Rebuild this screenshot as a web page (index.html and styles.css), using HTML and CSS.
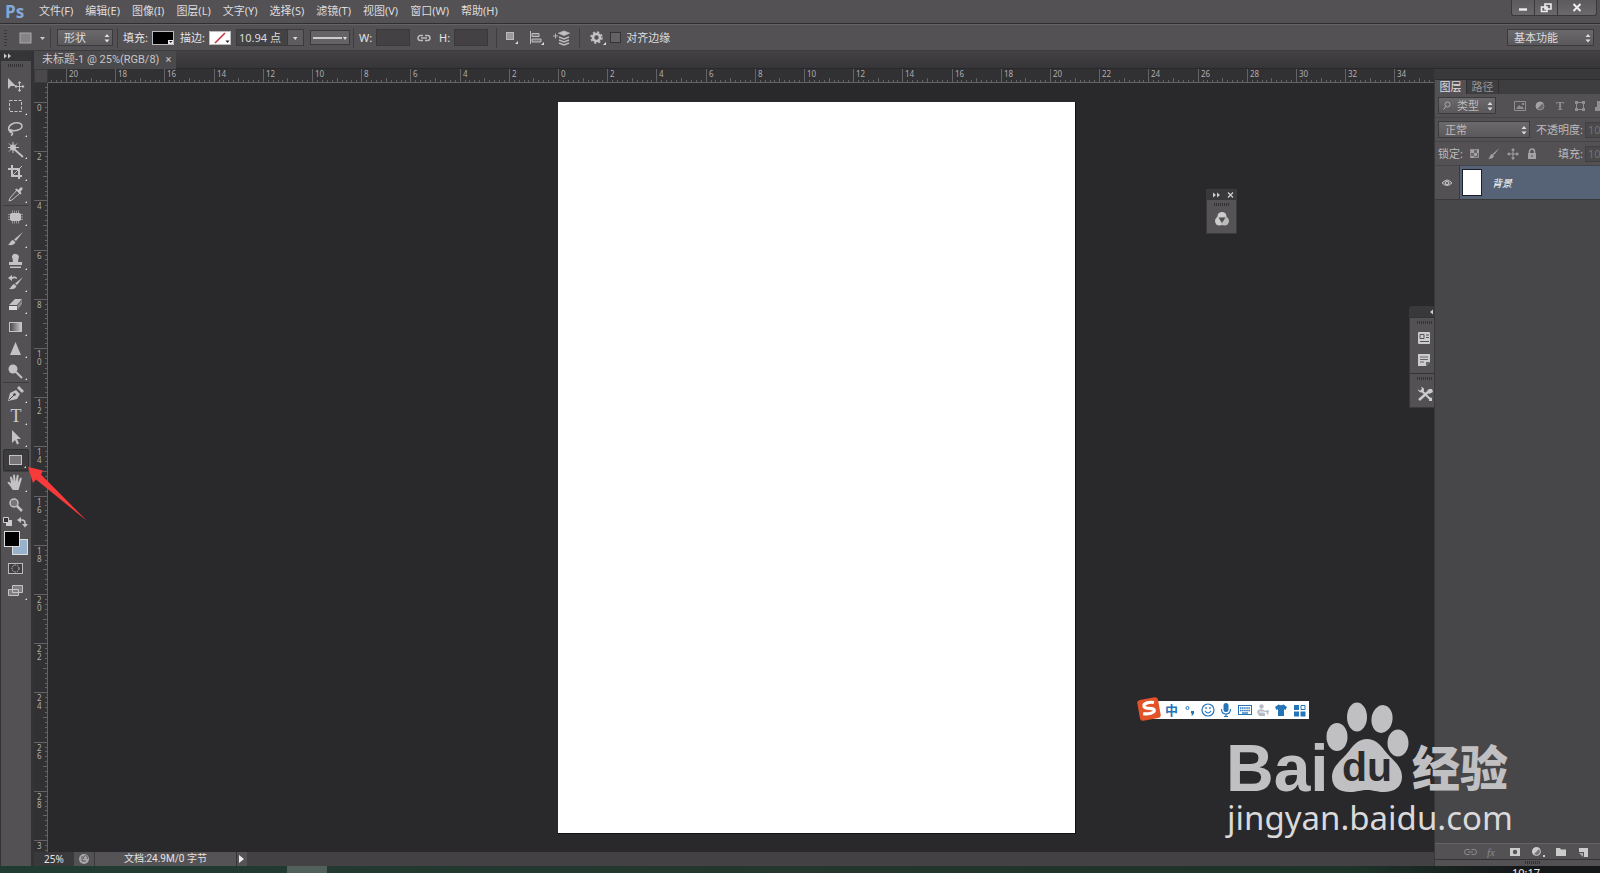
FILE: index.html
```html
<!DOCTYPE html>
<html lang="zh-CN">
<head>
<meta charset="utf-8">
<title>未标题-1 @ 25%(RGB/8)</title>
<link rel="stylesheet" href="styles.css">
</head>
<body>
<header class="menubar">
  <span class="brand">Ps</span>
  <nav class="menus">
    <button>文件(F)</button><button>编辑(E)</button><button>图像(I)</button><button>图层(L)</button><button>文字(Y)</button><button>选择(S)</button><button>滤镜(T)</button><button>视图(V)</button><button>窗口(W)</button><button>帮助(H)</button>
  </nav>
  <div class="winbtns">
    <button aria-label="最小化"><svg width="22" height="15"><path d="M7 9.500h8" stroke="#eee" stroke-width="2.400"/></svg></button>
    <button aria-label="还原"><svg width="22" height="15"><path d="M10 4h6v5h-6zM6.500 7h5.500v4.500h-5.500z" fill="#666466" stroke="#eee" stroke-width="1.600"/></svg></button>
    <button aria-label="关闭" class="wide"><svg width="22" height="15"><path d="M7.500 4l7 7M14.500 4l-7 7" stroke="#eee" stroke-width="2"/></svg></button>
  </div>
</header>

<section class="options">
  <span class="vgrip"></span>
  <button class="preset" aria-label="矩形工具预设"><svg width="28" height="16"><rect x="1" y="3" width="11" height="10" fill="#858385" stroke="#aaa"/><path d="M21 7h5l-2.500 3z" fill="#ccc"/></svg></button>
  <span class="vsep"></span>
  <span class="sel mode"><select aria-label="工具模式"><option>形状</option></select><svg class="ud" width="6" height="10"><path d="M0.500 4L3 1l2.500 3zM0.500 6.500L3 9.500l2.500-3z"/></svg></span>
  <span class="vsep after-mode"></span>
  <span class="lbl">填充:</span>
  <button class="swatch black" aria-label="填充颜色"><svg width="20" height="12"><path d="M15 8h5v4h-5z" fill="#eee"/><path d="M16 9h3.500l-1.700 2z" fill="#222"/></svg></button>
  <span class="lbl stroke">描边:</span>
  <button class="swatch" aria-label="描边颜色"><svg width="20" height="12"><path d="M5 11L15 1" stroke="#cc3340" stroke-width="1.600"/><path d="M15.500 8.500h4l-2 2.500z" fill="#222"/></svg></button>
  <span class="combo"><input aria-label="描边宽度" value="10.94 点"><button aria-label="宽度选项"><svg width="14" height="14"><path d="M5 6h4.500l-2.200 3z" fill="#ddd"/></svg></button></span>
  <button class="line" aria-label="描边类型"><svg width="37" height="14"><path d="M2 7h29" stroke="#eee" stroke-width="1.500"/><path d="M32 6h4l-2 3z" fill="#ddd"/></svg></button>
  <span class="vsep"></span>
  <label class="lbl" for="w">W:</label><input class="num" id="w">
  <svg class="chain" width="14" height="10"><path d="M6 2.500H3.500a2.500 2.500 0 000 5H6M8 2.500h2.500a2.500 2.500 0 010 5H8M4 5h6" fill="none" stroke="#bbb" stroke-width="1.500"/></svg>
  <label class="lbl" for="h">H:</label><input class="num" id="h">
  <span class="vsep ops"></span>
  <button class="op" aria-label="路径操作"><svg width="16" height="18"><rect x="1.500" y="3.500" width="7" height="7" fill="#999" stroke="#bbb"/><path d="M10 15h3v-3z" fill="#ddd"/></svg></button>
  <button class="op" aria-label="路径对齐"><svg width="16" height="18"><path d="M1.500 2v13M3 4.500h7v3H3zM3 10h9v3H3z" fill="#777" stroke="#c0bec0"/><path d="M12 16h3v-3z" fill="#ddd"/></svg></button>
  <button class="op" aria-label="路径排列"><svg width="18" height="18"><path d="M0 7h5M2.500 4.500v5M11 2l5.500 2.200L11 6.500 5.500 4.200z" fill="#c4c2c4" stroke="#b4b2b4"/><path d="M6 8l5 2 5-2M6 11l5 2 5-2M6 14l5 2 5-2" fill="none" stroke="#bbb" stroke-width="1.500"/></svg></button>
  <span class="vsep"></span>
  <button class="gear" aria-label="选项"><svg width="18" height="18"><circle cx="7.500" cy="8.500" r="5.300" fill="none" stroke="#bbb" stroke-width="2" stroke-dasharray="2.200 1.950"/><circle cx="7.500" cy="8.500" r="3.500" fill="none" stroke="#c4c2c4" stroke-width="2.600"/><path d="M14 16h3v-3z" fill="#ddd"/></svg></button>
  <label class="check"><input type="checkbox">对齐边缘</label>
  <span class="sel workspace"><select aria-label="工作区"><option>基本功能</option></select><svg class="ud" width="6" height="10"><path d="M0.500 4L3 1l2.500 3zM0.500 6.500L3 9.500l2.500-3z"/></svg></span>
</section>

<main class="main">
  <aside class="tools">
    <div class="tools-head"><svg width="8" height="6"><path d="M0 .5l3 2.500-3 2.500zM4 .5l3 2.500-3 2.500z" fill="#ccc"/></svg></div>
    <span class="hgrip"></span>
    <div class="group">
      <button aria-label="移动"><svg viewBox="0 0 24 22"><path class="f" d="M4 5v11l3-3h5z"/><path class="s" d="M15.500 9.500v8M11.500 13.500h8"/><path class="f" d="M15.500 8l2 2.300h-4zM15.500 19l2-2.300h-4zM10.500 13.500l2-2v4zM20.500 13.500l-2-2v4z"/></svg></button>
      <button aria-label="选框" class="more"><svg viewBox="0 0 24 22"><rect class="s" x="5.500" y="5.500" width="12" height="11" stroke-dasharray="3 1.500"/></svg></button>
      <button aria-label="套索" class="more"><svg viewBox="0 0 24 22"><path class="s" stroke-width="1.500" d="M8 15c-5-1-4-6 0-8s10-1.500 10 2-7 6-11 4c-3-1-1 3 1 2.500 1.500 1 0 2.500-1 3"/></svg></button>
      <button aria-label="魔棒" class="more"><svg viewBox="0 0 24 22"><path class="s" stroke-width="1.800" d="M10 10l9 8"/><path class="s" d="M9 3v11M4 8.500h11M5 4.500l8 8M13 4.500l-8 8"/><circle class="f" cx="9" cy="8.500" r="3"/></svg></button>
      <button aria-label="裁剪" class="more"><svg viewBox="0 0 24 22"><path class="s" stroke-width="2" d="M8 4v11h10M4 8h11v10"/><path class="s" d="M7 16L18 5"/></svg></button>
      <button aria-label="吸管" class="more"><svg viewBox="0 0 24 22"><path class="s" d="M13 7l3 3-8 7-3 1 1-3z"/><path class="f" d="M11 6.500l1.500-1 2 1.500c1-2 2.500-3 3.500-2.500 1.500 1 0 3-1.500 4l1 2-1 1z"/></svg></button>
    </div>
    <div class="group">
      <button aria-label="修补" class="more"><svg viewBox="0 0 24 22"><rect class="f" x="6" y="7" width="11" height="8" rx="2"/><path class="s" d="M8.500 4.500v13M10.500 4.500v13M12.500 4.500v13M14.500 4.500v13M4 8.500h15M4 11h15M4 13.500h15" opacity=".6"/></svg></button>
      <button aria-label="画笔" class="more"><svg viewBox="0 0 24 22"><path class="f" d="M19 4l-7 9-2-1.500zM9 12l2.500 2c-1 3-4 3.500-7.500 3 2-1 2.500-4.500 5-5z"/></svg></button>
      <button aria-label="图章" class="more"><svg viewBox="0 0 24 22"><path class="f" d="M12 4a3 3 0 012.500 4.500L14 12h4v3H5v-3h4l-.5-3.500A3 3 0 0112 4zM6 16.500h11V18H6z"/></svg></button>
      <button aria-label="历史画笔" class="more"><svg viewBox="0 0 24 22"><path class="f" d="M19 5l-6 8-2-1.500zM10 12l2.500 2c-1 3-4 3.500-7.500 3 2-1 2.500-4 5-5zM4 6l4-3v2c4-1 5 0 5 2-2-1-3-1-5 0v2z"/></svg></button>
      <button aria-label="橡皮擦" class="more"><svg viewBox="0 0 24 22"><path class="f" d="M11 5h7l-5 6H5z"/><path d="M5 12h8v4H5z" fill="#dcdadc"/><path d="M13.500 11.500L18 6v4l-4.500 6z" fill="#8c8a8c"/></svg></button>
      <button aria-label="渐变" class="more"><svg viewBox="0 0 24 22"><defs><linearGradient id="g"><stop stop-color="#454345"/><stop offset="1" stop-color="#ccc"/></linearGradient></defs><rect x="5.500" y="6.500" width="12" height="9" fill="url(#g)" stroke="#c4c2c4"/></svg></button>
      <button aria-label="锐化" class="more"><svg viewBox="0 0 24 22"><path class="f" d="M11.500 4L17 17H6z"/></svg></button>
      <button aria-label="减淡" class="more"><svg viewBox="0 0 24 22"><circle class="f" cx="9" cy="9" r="4.500"/><path class="s" stroke-width="2" d="M12 12l6 6"/></svg></button>
    </div>
    <div class="group">
      <button aria-label="钢笔" class="more"><svg viewBox="0 0 24 22"><path class="f" d="M4 18l2-8 6-3 4 4-3 5zM13 5l2-2 5 5-2 2z"/><path d="M5 17l5-5" stroke="#444"/><circle cx="10.500" cy="11.500" r="1.300" fill="#444"/></svg></button>
      <button aria-label="文字" class="more type">T</button>
      <button aria-label="路径选择" class="more"><svg viewBox="0 0 24 22"><path class="f" d="M8 3v13l3-3 2 4.500 2-1-2-4.500h4z"/></svg></button>
      <button aria-label="矩形" class="more active"><svg viewBox="0 0 24 22"><rect x="5.500" y="6.500" width="12" height="9" fill="#777577" stroke="#c4c2c4"/></svg></button>
    </div>
    <div class="group">
      <button aria-label="抓手" class="more"><svg viewBox="0 0 24 22"><path class="f" d="M8 17c-1-3-4-5-4.500-6.500.5-1.500 2-.5 3.500 1L6 5.500c0-1.500 1.500-1.500 2 0l1.500 4-.5-6c.2-1.500 1.800-1.500 2 0l.7 6 1-6c.5-1.300 2-1 1.900.5l-.6 6.500L16 6c.8-1 2-.5 1.700 1L16 13l-1.500 5H9z"/></svg></button>
      <button aria-label="缩放"><svg viewBox="0 0 24 22"><circle cx="10" cy="9" r="4" fill="#777577" stroke="#c4c2c4" stroke-width="1.500"/><path class="s" stroke-width="2.500" d="M13 12l5 5"/></svg></button>
    </div>
    <button class="mini" aria-label="默认与切换颜色"><svg width="28" height="12"><path d="M4 4h6v6H4z" fill="#ccc"/><path d="M1.500 1.500h5v5h-5z" fill="#333" stroke="#ccc"/><path class="s" stroke-width="1.500" d="M18 4h2q3 0 3 3v2"/><path class="f" d="M19 1v6l-4-3zM20 8h6l-3 3.500z"/></svg></button>
    <div class="colors"><button class="bg" aria-label="背景色"></button><button class="fg" aria-label="前景色"></button></div>
    <div class="last">
      <button aria-label="快速蒙版"><svg viewBox="0 0 24 22"><rect x="4.500" y="5.500" width="14" height="10" fill="#403e40" stroke="#bbb"/><circle cx="11.500" cy="10.500" r="3.500" fill="none" stroke="#ccc" stroke-dasharray="1.500 1"/></svg></button>
      <button aria-label="屏幕模式" class="more"><svg viewBox="0 0 24 22"><path d="M8.500 5.500h10v7h-10zM4.500 9.500h10v6h-10z" fill="#807e80" stroke="#c4c2c4"/></svg></button>
    </div>
  </aside>

  <div class="right">
    <div class="tabs"><div class="tab">未标题-1 @ 25%(RGB/8)<button aria-label="关闭文档">×</button></div></div>
    <div class="work">
      <div class="doc">
        <div class="corner"></div>
        <svg class="hruler" id="hruler"></svg>
        <svg class="vruler" id="vruler"></svg>
        <div class="canvas">
          <div class="page"></div>
          <div class="floater">
            <div class="floater-head"><svg width="22" height="8"><path d="M0 1.500l3 2.500-3 2.500zM4 1.500l3 2.500-3 2.500z" fill="#ccc"/><path d="M15 1.500l5 5M20 1.500l-5 5" stroke="#ccc" stroke-width="1.300"/></svg></div>
            <span class="hgrip"></span>
            <button aria-label="颜色"><svg width="16" height="16"><circle cx="8" cy="5.500" r="4.500" fill="#ccc"/><circle cx="5.500" cy="10" r="4.500" fill="#ccc"/><circle cx="10.500" cy="10" r="4.500" fill="#bbb"/><path d="M4.500 6.500h7L8 12z" fill="#514f51"/></svg></button>
          </div>
          <div class="dock">
            <div class="floater-head"><svg width="4" height="6"><path d="M4 .5L1 3l3 2.500z" fill="#ccc"/></svg></div>
            <div class="dock-group"><span class="hgrip"></span>
              <button aria-label="画笔预设"><svg width="14" height="16"><rect x="1" y="2" width="12" height="12" rx="1" fill="#ccc"/><path d="M3 4.500h4v4H3zM9 5h3M9 7.500h3M3 11.500h9" stroke="#555" fill="none"/></svg></button>
              <button aria-label="注释"><svg width="14" height="16"><path d="M1 2h12v8l-4 4H1z" fill="#ccc"/><path d="M3 5h8M3 7.500h8M3 10h4" stroke="#666"/><path d="M13 10H9v4z" fill="#666"/></svg></button>
            </div>
            <div class="dock-group"><span class="hgrip"></span>
              <button aria-label="工具预设"><svg width="16" height="16"><path d="M4 4l9 9" stroke="#ccc" stroke-width="2"/><path d="M2 14l9-8" stroke="#ccc" stroke-width="2.500"/><path d="M1 3l2 2 2-2-1-2c3 0 4 3 2 5-2 1-5 0-5-3zM15 3h-3l-2 2 2 3 4-2zM12 11l3 1v3h-3z" fill="#ccc"/></svg></button>
            </div>
          </div>
        </div>
      </div>

      <aside class="panel">
        <div class="panel-head"></div>
        <div class="panel-tabs"><button class="on">图层</button><button>路径</button></div>
        <div class="prow">
          <span class="sel kind"><svg class="mag" width="8" height="9"><circle cx="4.500" cy="3.500" r="2.500" fill="none" stroke="#aaa"/><path d="M3 5.500L.5 8.500" stroke="#aaa"/></svg><select aria-label="类型"><option>类型</option></select><svg class="ud" width="6" height="10"><path d="M0.500 4L3 1l2.500 3zM0.500 6.500L3 9.500l2.500-3z"/></svg></span>
          <span class="filters">
            <svg width="12" height="12"><path d="M.5 1.500h11v9H.5z" fill="none" stroke="#908e90"/><path d="M2 9l3-4 2 2 1-1 2 3zM8 3h2v2H8z" fill="#908e90"/></svg>
            <svg width="12" height="12"><circle cx="6" cy="6" r="4" fill="#6a686a" stroke="#908e90"/><path d="M3 9A4.200 4.200 0 019 3z" fill="#a4a2a4"/></svg>
            <span class="tt">T</span>
            <svg width="12" height="12"><path d="M2.500 2.500h7v7h-7z" fill="none" stroke="#908e90"/><path d="M1 1h3v3H1zM8 1h3v3H8zM1 8h3v3H1zM8 8h3v3H8z" fill="#908e90"/></svg>
            <svg width="12" height="12"><path d="M3 1h8v6H3zM1 7h10v4H1z" fill="#908e90"/></svg>
          </span>
        </div>
        <div class="prow">
          <span class="sel blend"><select aria-label="混合模式"><option>正常</option></select><svg class="ud" width="6" height="10"><path d="M0.500 4L3 1l2.500 3zM0.500 6.500L3 9.500l2.500-3z"/></svg></span>
          <label class="plabel" for="op">不透明度:</label><input class="pct" id="op" value="100%" disabled>
        </div>
        <div class="prow lock">
          <span class="plabel0">锁定:</span>
          <span class="locks">
            <svg width="12" height="12"><rect x="1.500" y="1.500" width="8" height="8" fill="#6a686a" stroke="#908e90"/><path d="M2 2h3v3H2zM5 5h3v3H5zM8 2h2v3H8zM2 8h3v2H2z" fill="#a4a2a4"/></svg>
            <svg width="12" height="12"><path d="M11.500 0L6 7 4.500 6zM4 6l2 2c-1 3-4 3-6 2.500C2 10 2 6.500 4 6z" fill="#a4a2a4"/></svg>
            <svg width="12" height="12"><path d="M6 1v10M1 6h10" stroke="#a4a2a4"/><path d="M6 0l2 2.500H4zM6 12l2-2.500H4zM0 6l2.500-2v4zM12 6L9.500 4v4z" fill="#a4a2a4"/></svg>
            <svg width="12" height="12"><path d="M2 5h8v6H2z" fill="#a4a2a4"/><path d="M3.500 5V3.500a2.500 2.500 0 015 0V5" fill="none" stroke="#a4a2a4" stroke-width="1.500"/><path d="M6 7v2" stroke="#555"/></svg>
          </span>
          <label class="plabel" for="fill">填充:</label><input class="pct" id="fill" value="100%" disabled>
        </div>
        <div class="layer">
          <button class="eye" aria-label="可见性"><svg width="12" height="10"><path d="M1 5q5-6 10 0-5 5-10 0z" fill="#777577" stroke="#bbb"/><circle cx="6" cy="5" r="2" fill="#ccc"/><circle cx="6" cy="5" r="1" fill="#444"/></svg></button>
          <div class="layer-body"><span class="thumb"></span><span class="lname">背景</span></div>
        </div>
        <div class="empty"></div>
        <div class="panel-foot">
          <svg width="13" height="12"><path d="M5.500 3.500H3a2.500 2.500 0 000 5h2.500M7.500 3.500H10a2.500 2.500 0 010 5H7.500M4 6h5" fill="none" stroke="#8c8a8c"/></svg>
          <span class="fx">fx</span>
          <svg width="12" height="12"><path d="M1 2h10v8H1z" fill="#ccc"/><circle cx="6" cy="6" r="2.200" fill="#555"/></svg>
          <svg width="14" height="12"><circle cx="5.500" cy="5.500" r="4" fill="#777" stroke="#ccc"/><path d="M2.500 8.500a4.200 4.200 0 016-6z" fill="#ccc"/><path d="M12 9h2v2h-2z" fill="#ccc"/></svg>
          <svg width="12" height="12"><path d="M1 2h4l1 1.500h5V10H1z" fill="#ccc"/></svg>
          <svg width="12" height="12"><path d="M2 2h9v9H7V6H2z" fill="#ccc"/><path d="M2 7h4v4z" fill="#aaa"/></svg>
        </div>
        <div class="panel-grip"><span class="hgrip"></span></div>
      </aside>

      <footer class="status">
        <span class="zoom">25%</span>
        <button class="share" aria-label="共享"><svg width="12" height="12"><circle cx="6" cy="6" r="5" fill="#aaa8aa"/><path d="M4 3v5h4M6 6a2 2 0 113 0" stroke="#555" fill="none"/></svg></button>
        <span class="info">文档:24.9M/0 字节</span>
        <button class="play" aria-label="状态选项"><svg width="10" height="12"><path d="M2 2v8l5-4z" fill="#eee"/></svg></button>
      </footer>
    </div>
  </div>
</main>
<div class="taskbar"><span class="task"></span><span class="clock">10:17</span></div>

<svg class="pointer" width="60" height="56" viewBox="0 0 60 56"><path d="M0 0L15 3.500 13 7.500 59 54 8 12.500 5 16z" fill="#f93a3a"/></svg>

<div class="ime">
  <svg class="sogou" width="24" height="24"><g transform="rotate(-10 12 12)"><rect x="1.500" y="1.500" width="21" height="21" rx="3" fill="#e2532a"/><path d="M18 6.500C14 5 7.500 5 7.500 8.500c0 4 9.500 2 9.500 5.500 0 3-7 3-11.500 1.500" fill="none" stroke="#fff" stroke-width="3.200"/></g></svg>
  <span class="zh">中</span>
  <svg width="14" height="14"><circle cx="4.500" cy="5" r="1.500" fill="none" stroke="#2574b8"/><path d="M8 8h3v2.500L9 13l-.5-.5.500-2H8z" fill="#2574b8"/></svg>
  <svg width="14" height="14"><circle cx="7" cy="7" r="6" fill="none" stroke="#2574b8" stroke-width="1.200"/><path d="M5 4v2M9 4v2M4 8q3 4 6 0" fill="none" stroke="#2574b8" stroke-width="1.200"/></svg>
  <svg width="14" height="14"><rect x="4.500" y="0" width="5" height="9" rx="2.500" fill="#2574b8"/><path d="M2.500 6q0 5 4.500 5t4.500-5M7 11v3M5 13.500h4" fill="none" stroke="#2574b8" stroke-width="1.200"/></svg>
  <svg width="14" height="14"><rect x=".5" y="2.500" width="13" height="9" fill="none" stroke="#2574b8"/><path d="M2 5h10M2 7.500h10" stroke="#2574b8" stroke-width="1.500" stroke-dasharray="1.500 .6"/><path d="M4 10h6" stroke="#2574b8" stroke-width="1.300"/></svg>
  <svg width="14" height="14"><circle cx="5.500" cy="3.500" r="2.200" fill="#b5bac6"/><path d="M1 9c1-4 8-3 8 0v4H3zM8 8l5-1-1 5z" fill="#b5bac6"/><path d="M3 9h4l4 1" stroke="#fff" fill="none"/></svg>
  <svg width="14" height="14"><path d="M4.500 1.500q2.500 1.500 5 0L13 4l-1.500 3-1.500-.7V13H4V6.300L2.500 7 1 4z" fill="#2574b8"/></svg>
  <svg width="14" height="14"><path d="M2 2h5v5H2zM2 8.500h5v5H2zM8.500 8.500h5v5h-5z" fill="#2574b8"/><path d="M9 2.500h4v4H9z" fill="none" stroke="#2574b8"/></svg>
</div>

<div class="mark">
  <div class="mark-top">
    <span class="bai">Bai</span>
    <span class="paw"><svg width="84" height="92" viewBox="0 0 84 92"><g fill="#c0bfc1"><ellipse cx="11" cy="35" rx="10.500" ry="14"/><ellipse cx="31" cy="15" rx="10" ry="14.500"/><ellipse cx="56" cy="17" rx="10.500" ry="14" transform="rotate(8 56 17)"/><ellipse cx="72" cy="41" rx="10.500" ry="13.500"/><path d="M41 37c8 0 13 5 18 12 6 8 17 14 17 26 0 10-8 15-18 15-7 0-11-2-17-2s-10 2-17 2C13 90 6 85 6 75c0-11 10-17 17-26 5-7 10-12 18-12z"/></g></svg><span class="du">du</span></span>
    <span class="jy">经验</span>
  </div>
  <div class="url">jingyan.baidu.com</div>
</div>
<script src="rulers.js"></script>
</body>
</html>
```

FILE: styles.css
```css
* { box-sizing: border-box; }
body {
  margin: 0; min-height: 100vh; display: flex; flex-direction: column; position: relative; overflow: hidden;
  background: #29282a; color: #dedcde;
  font: 11px/16px "Noto Sans", "Noto Sans CJK SC", sans-serif;
}
button, input, select { font: inherit; color: inherit; border: 0; padding: 0; margin: 0; background: none; border-radius: 0; }
button { display: flex; align-items: center; justify-content: center; }
select { appearance: none; width: 100%; height: 100%; padding-left: 6px; line-height: 14px; }
svg { display: block; flex: none; }
.f { fill: #c4c2c4; }
.s { fill: none; stroke: #c4c2c4; }

.menubar { display: flex; height: 24px; background: #535153; border-bottom: 1px solid #2f2e30; align-items: center; }
.brand { width: 39px; padding-left: 5px; font: bold 17px/20px "Open Sans", sans-serif; color: #82a9d8; }
.menus { display: flex; gap: 12px; flex: 1; padding-bottom: 1px; }
.winbtns { display: flex; align-self: flex-start; margin-right: 3px; height: 16px; border: 1px solid #39383a; border-top: 0; border-radius: 0 0 3px 3px; background: linear-gradient(#5c5a5c, #6a686a); }
.winbtns button { width: 23px; border-right: 1px solid #39383a; }
.winbtns .wide { width: 38px; border-right: 0; }

.options { display: flex; align-items: center; height: 27px; background: #535153; border-top: 1px solid #656365; border-bottom: 1px solid #3c3b3d; padding-left: 4px; }
.vgrip { width: 3px; height: 16px; background: repeating-linear-gradient(#39383a 0 1px, transparent 1px 3px); }
.vsep { width: 1px; height: 20px; background: #3e3d3f; margin: 0 6px; }
.preset { margin-left: 12px; width: 28px; margin-right: -3px; }
.after-mode { margin: 0 5px 0 4px; }
.sel { position: relative; flex: none; height: 17px; background: linear-gradient(#6b696b, #5a585a); border: 1px solid #3b3a3c; display: block; }
.ud { position: absolute; right: 2px; top: 3px; fill: #ddd; pointer-events: none; }
.mode { width: 56px; }
.lbl { color: #e4e2e4; white-space: nowrap; }
.swatch { width: 22px; height: 14px; border: 1px solid #bbb; background: #fff; margin-left: 4px; }
.swatch.black { background: #000; }
.stroke { margin-left: 6px; }
.combo { display: flex; width: 68px; height: 17px; margin-left: 5px; border: 1px solid #3a393b; background: #434244; }
.combo input { width: 50px; padding-left: 2px; }
.combo button { width: 16px; background: #5e5c5e; border-left: 1px solid #3a393b; }
.line { width: 40px; height: 15px; margin-left: 6px; border: 1px solid #39383a; background: #656365; }
.line + .vsep { margin: 0 5px 0 3px; }
.num { width: 34px; height: 17px; background: #434143; border: 1px solid #39383a; margin-left: 4px; }
.chain { margin: 0 8px 0 7px; }
.ops { margin: 0 8px; }
.op { margin-right: 8px; }
.op + .vsep { margin: 0 8px 0 0; }
.gear { width: 20px; }
.check { display: flex; align-items: center; gap: 5px; margin-left: 2px; }
.check input { appearance: none; width: 11px; height: 11px; border: 1px solid #353436; background: #646264; }
.workspace { width: 87px; margin-left: auto; margin-right: 6px; }

.main { display: flex; flex: 1; min-height: 0; }
.tools { width: 34px; border-left: 1px solid #333; border-right: 3px solid #333234; background: #535153; display: flex; flex-direction: column; align-items: center; }
.tools-head { align-self: stretch; height: 10px; padding: 2px 3px; background: #353436; }
.hgrip { display: block; width: 16px; height: 3px; margin: 4px auto 0; background: repeating-linear-gradient(90deg, #333234 0 1px, transparent 1px 2px); }
.tools > .hgrip { margin: 3px auto 6px; }
.group + .group { border-top: 1px solid #3e3d3f; }
.group button, .last button { width: 26px; height: 22px; position: relative; }
.group svg, .last svg { width: 24px; height: 22px; }
.more::after { content: ""; position: absolute; right: 2px; bottom: 2px; border: 1px solid #ddd; border-top-color: transparent; border-left-color: transparent; }
.type { font: 18px/22px "Liberation Serif", serif; color: #ccc; }
.group .active { background: #3b3a3c; border: 1px solid #2e2d2f; border-radius: 2px; }
.mini { height: 12px; }
.colors { position: relative; width: 28px; height: 30px; }
.colors button { position: absolute; width: 16px; height: 16px; border: 1px solid #ddd; }
.colors .fg { left: 2px; top: 3px; background: #000; }
.colors .bg { right: 2px; bottom: 3px; background: #97b2ca; }

.right { flex: 1; min-width: 0; display: flex; flex-direction: column; }
.tabs { height: 18px; background: linear-gradient(#434144, #363537); border-bottom: 1px solid #29282a; display: flex; }
.tab { display: flex; align-items: center; gap: 6px; padding: 0 5px 0 8px; height: 18px; background: #4a494b; color: #c8c6c8; font-family: Roboto, "Noto Sans CJK SC", sans-serif; }
.work { flex: 1; min-height: 0; display: grid; grid-template-columns: minmax(0, 1fr) 166px; grid-template-rows: minmax(0, 1fr) 14px; }
.doc { display: grid; grid-template-columns: 14px minmax(0, 1fr); grid-template-rows: 14px minmax(0, 1fr); min-height: 0; }
.corner { background: #4a484a; border: 1px solid #3a393b; }
.hruler, .vruler { width: 100%; height: 100%; background: #313032; overflow: hidden; }
.hruler path, .vruler path { stroke: #646264; fill: none; shape-rendering: crispEdges; }
.hruler text, .vruler text { font: 8px "Noto Sans", sans-serif; fill: #b0aeb0; }
.canvas { position: relative; overflow: hidden; background: #29282a; }
.page { position: absolute; left: 510px; top: 19px; width: 518px; height: 732px; background: #fff; border-right: 1px solid #111; border-bottom: 1px solid #111; }
.floater { position: absolute; right: 197px; top: 106px; width: 31px; height: 45px; background: #555355; border: 1px solid #3a393b; }
.floater-head { height: 10px; display: flex; align-items: center; justify-content: flex-end; background: #39383a; padding-right: 1px; }
.floater .hgrip { margin: 3px auto 2px; }
.floater button { width: 100%; height: 22px; }
.dock { position: absolute; right: 0; top: 223px; width: 25px; background: #535153; border: 1px solid #39383a; border-right: 0; border-radius: 4px 0 0 0; overflow: hidden; }
.dock-group { padding-left: 7px; border-top: 1px solid #333; padding-bottom: 2px; }
.dock-group .hgrip { margin: 3px 0; }
.dock-group button { height: 22px; justify-content: flex-start; }

.panel { grid-row: 1 / 3; grid-column: 2; min-width: 0; overflow: hidden; display: flex; flex-direction: column; background: #535153; border-left: 1px solid #39383a; color: #bcbabc; }
.panel-head { height: 11px; background: #39383a; border-bottom: 1px solid #2d2c2e; }
.panel-tabs { display: flex; height: 14px; background: #3e3d3f; }
.panel-tabs button { width: 32px; color: #999799; border-right: 1px solid #2f2e30; line-height: 14px; }
.panel-tabs .on { background: #535153; color: #e0dee0; }
.prow { display: flex; align-items: center; flex: none; height: 24px; border-bottom: 1px solid #454446; padding-left: 3px; white-space: nowrap; }
.kind { width: 58px; display: flex; align-items: center; }
.kind .mag { margin-left: 4px; }
.filters { display: flex; gap: 8px; margin-left: 18px; align-items: center; }
.tt { width: 12px; text-align: center; font: bold 12px/12px "Liberation Serif", serif; color: #908e90; }
.blend { width: 92px; }
.plabel { margin-left: 6px; }
.pct { width: 40px; flex: none; height: 16px; margin-left: 2px; padding-left: 2px; background: #4a494b; border: 1px solid #403f41; color: #747274; }
.locks { display: flex; gap: 7px; margin-left: 6px; }
.lock .plabel { margin-left: 20px; }
.layer { display: flex; flex: none; height: 33px; }
.eye { width: 25px; border-right: 1px solid #3a393b; }
.layer-body { flex: 1; display: flex; align-items: center; background: #566376; padding-left: 2px; }
.thumb { width: 20px; height: 27px; background: #fff; border: 1px solid #1b1e2a; }
.lname { margin-left: 10px; font-style: italic; color: #fff; font-size: 10px; }
.empty { flex: 1; background: #474648; border-top: 1px solid #39383a; }
.panel-foot { display: flex; flex: none; align-items: center; height: 16px; padding-left: 29px; gap: 10px; border-top: 1px solid #656365; }
.fx { font: italic 11px/12px "Liberation Serif", serif; color: #8c8a8c; width: 12px; }
.panel-grip { height: 7px; flex: none; border-top: 1px solid #333; }
.panel-grip .hgrip { margin: 1px 0 0 90px; }

.status { grid-column: 1; display: flex; height: 14px; background: #434143; color: #e4e2e4; line-height: 14px; font-size: 10px; }
.zoom { width: 40px; background: #39383a; padding-left: 10px; }
.share { width: 20px; background: #535153; }
.info { width: 142px; border-left: 1px solid #39383a; background: #555355; text-align: center; font-family: Roboto, "Noto Sans CJK SC", sans-serif; }
.play { width: 11px; background: #555355; border-left: 1px solid #333; }

.taskbar { height: 7px; overflow: hidden; background: linear-gradient(90deg, #203c32, #24362e 50%, #1d3229 85%, #151718 95%); display: flex; }
.task { width: 40px; margin-left: 287px; background: #52605c; }
.clock { margin-left: auto; margin-right: 60px; line-height: 14px; color: #eee; }

.pointer { position: absolute; left: 28px; top: 467px; }
.ime { position: absolute; right: 291px; top: 701px; height: 18px; width: 166px; background: #fff; display: flex; align-items: center; justify-content: space-between; padding: 0 3px 0 22px; color: #2574b8; }
.sogou { position: absolute; left: -6px; top: -4px; }
.zh { width: 14px; font: bold 13px/16px "Noto Sans CJK SC", sans-serif; }
.mark { position: absolute; right: 84px; top: 702px; width: 290px; }
.mark-top { display: flex; height: 92px; color: #c0bfc1; }
.bai { width: 98px; margin-top: 38px; font: bold 66px/56px "Liberation Sans", sans-serif; }
.paw { position: relative; width: 84px; margin-left: 2px; }
.du { position: absolute; left: 16px; top: 44px; font: bold 41px/42px "Liberation Sans", sans-serif; color: #2b2a2c; }
.jy { margin: 39px 0 0 2px; font: 900 48px/48px "Noto Sans CJK SC", sans-serif; white-space: nowrap; }
.url { font: 33px/44px "Noto Sans", sans-serif; color: #dad9db; margin-top: 2px; padding-left: 1px; }
```

FILE: rulers.js
```js
(function () {
  var NS = 'http://www.w3.org/2000/svg';
  var STEP = 49.2;
  function add(svg, name, attrs, text) {
    var el = document.createElementNS(NS, name);
    for (var k in attrs) el.setAttribute(k, attrs[k]);
    if (text !== undefined) el.textContent = text;
    svg.appendChild(el);
  }
  function ruler(svg, zero, vertical) {
    var box = svg.getBoundingClientRect();
    var size = vertical ? box.height : box.width;
    var first = Math.ceil(-zero / STEP * 10);
    var last = Math.floor((size - zero) / STEP * 10);
    var d = '';
    for (var i = first; i <= last; i++) {
      var p = Math.round(zero + i * STEP / 10);
      var major = i % 10 === 0;
      var len = major ? 14 : i % 5 === 0 ? 5 : 3;
      d += vertical ? 'M' + (14 - len) + ' ' + (p + 0.5) + 'H14' : 'M' + (p + 0.5) + ' ' + (14 - len) + 'V14';
      if (!major) continue;
      var label = String(Math.abs(i / 5));
      if (!vertical) add(svg, 'text', { x: p + 3, y: 8 }, label);
      else label.split('').forEach(function (c, j) {
        var y = p + 9 + j * 8;
        if (y < size) add(svg, 'text', { x: 3, y: y }, c);
      });
    }
    d += vertical ? 'M13.5 0V' + size : 'M0 13.5H' + size;
    add(svg, 'path', { d: d });
  }
  ruler(document.getElementById('hruler'), 510, false);
  ruler(document.getElementById('vruler'), 19, true);
})();
```
